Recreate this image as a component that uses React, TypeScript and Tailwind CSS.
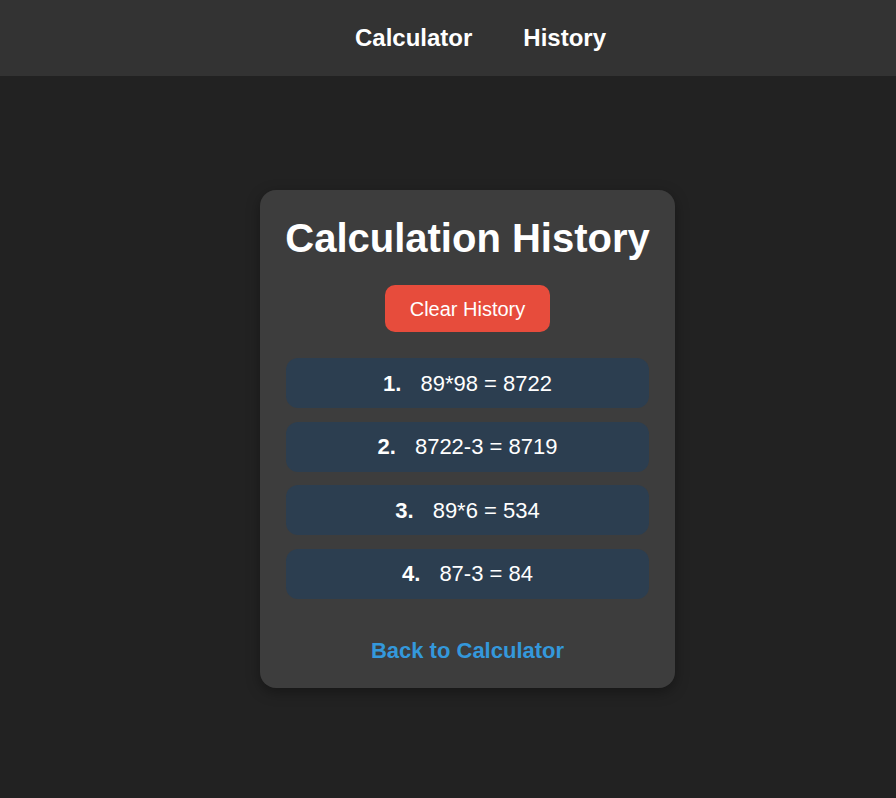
import React, { useState } from 'react';

const history = [
  { expr: '89*98', result: 8722 },
  { expr: '8722-3', result: 8719 },
  { expr: '89*6', result: 534 },
  { expr: '87-3', result: 84 },
];

const App = () => {
  const [items, setItems] = useState(history);

  return (
    <div className="min-h-screen bg-[#222222] text-white font-['Liberation_Sans',Arial,sans-serif]">
      {/* Navbar */}
      <nav className="h-[76px] bg-[#333333] flex items-center justify-center pl-[65px] gap-[51px]">
        <a href="#" className="text-[24px] font-bold text-white">Calculator</a>
        <a href="#" className="text-[24px] font-bold text-white">History</a>
      </nav>

      {/* Main */}
      <main className="flex justify-center pt-[114px] pl-[39px]">
        <div className="w-[415px] bg-[#3d3d3d] rounded-[16px] px-[26px] pt-[25px] pb-[25px] flex flex-col items-center shadow-[0_4px_14px_rgba(0,0,0,0.35)]">
          <h1 className="text-[40px] leading-[46px] font-bold whitespace-nowrap">Calculation History</h1>

          <button
            onClick={() => setItems([])}
            className="mt-[24px] h-[47px] px-[25px] bg-[#e74c3c] rounded-[10px] text-[20px] text-white"
          >
            Clear History
          </button>

          <ul className="mt-[26px] w-full flex flex-col gap-[13.5px]">
            {items.map((item, index) => (
              <li
                key={index}
                className="h-[50px] bg-[#2c3e50] rounded-[12px] flex items-center justify-center text-[22px]"
              >
                <span className="font-bold mr-[19px]">{index + 1}.</span>
                <span>{item.expr} = {item.result}</span>
              </li>
            ))}
          </ul>

          <a href="#" className="mt-[39px] text-[22px] leading-[25px] font-bold text-[#3498db]">
            Back to Calculator
          </a>
        </div>
      </main>
    </div>
  );
};

export default App;
